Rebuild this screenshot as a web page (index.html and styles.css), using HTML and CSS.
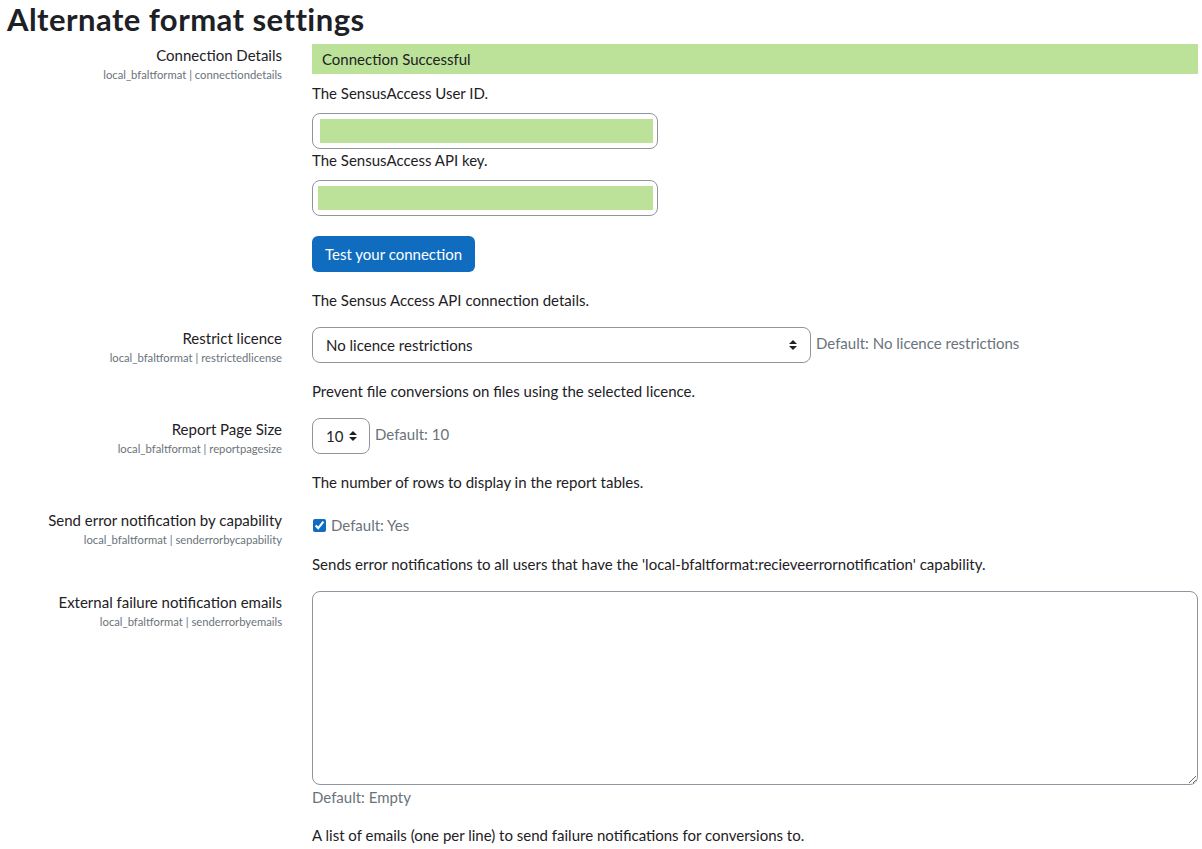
FILE: index.html
```html
<!DOCTYPE html>
<html>
  <head>
    <meta charset="UTF-8" />
    <meta name="viewport" content="width=device-width, initial-scale=1.0" />
    <title>Alternate format settings</title>
    <link rel="stylesheet" href="styles.css">
  </head>
  <body>
    <h2 class="page-title">Alternate format settings</h2>

    <div class="settings">
      <div class="form-item">
        <div class="form-label">
          <label>Connection Details</label>
          <span class="form-shortname">local_bfaltformat | connectiondetails</span>
        </div>
        <div class="form-setting">
          <div class="status-bar">Connection Successful</div>
          <p class="field-label">The SensusAccess User ID.</p>
          <div class="form-control redacted-box"><span class="redacted"></span></div>
          <p class="field-label tight">The SensusAccess API key.</p>
          <div class="form-control redacted-box key"><span class="redacted"></span></div>
          <button type="button" class="btn-primary">Test your connection</button>
          <div class="form-description">The Sensus Access API connection details.</div>
        </div>
      </div>

      <div class="form-item">
        <div class="form-label">
          <label for="restrictedlicense">Restrict licence</label>
          <span class="form-shortname">local_bfaltformat | restrictedlicense</span>
        </div>
        <div class="form-setting">
          <div class="select-line">
            <select id="restrictedlicense" class="custom-select wide">
              <option>No licence restrictions</option>
            </select>
            <span class="form-defaultinfo">Default: No licence restrictions</span>
          </div>
          <div class="form-description">Prevent file conversions on files using the selected licence.</div>
        </div>
      </div>

      <div class="form-item">
        <div class="form-label">
          <label for="reportpagesize">Report Page Size</label>
          <span class="form-shortname">local_bfaltformat | reportpagesize</span>
        </div>
        <div class="form-setting">
          <div class="select-line">
            <select id="reportpagesize" class="custom-select small">
              <option>10</option>
            </select>
            <span class="form-defaultinfo">Default: 10</span>
          </div>
          <div class="form-description">The number of rows to display in the report tables.</div>
        </div>
      </div>

      <div class="form-item">
        <div class="form-label">
          <label for="senderrorbycapability">Send error notification by capability</label>
          <span class="form-shortname">local_bfaltformat | senderrorbycapability</span>
        </div>
        <div class="form-setting">
          <div class="form-check">
            <input type="checkbox" id="senderrorbycapability" checked />
            <span class="form-defaultinfo">Default: Yes</span>
          </div>
          <div class="form-description">Sends error notifications to all users that have the 'local-bfaltformat:recieveerrornotification' capability.</div>
        </div>
      </div>

      <div class="form-item">
        <div class="form-label">
          <label for="senderrorbyemails">External failure notification emails</label>
          <span class="form-shortname">local_bfaltformat | senderrorbyemails</span>
        </div>
        <div class="form-setting">
          <textarea id="senderrorbyemails" class="form-textarea"></textarea>
          <div class="form-defaultinfo block">Default: Empty</div>
          <div class="form-description last">A list of emails (one per line) to send failure notifications for conversions to.</div>
        </div>
      </div>
    </div>
  </body>
</html>
```

FILE: styles.css
```css
* {
  box-sizing: border-box;
  margin: 0;
  padding: 0;
}

body {
  font-family: Lato, "Liberation Sans", sans-serif;
  font-size: 15px;
  line-height: 22px;
  color: #1d2125;
  background-color: #fff;
  padding: 0 4px 0 0;
}

.page-title {
  font-size: 31px;
  font-weight: 700;
  letter-spacing: 0.45px;
  line-height: 1.2;
  padding: 1px 0 0 7px;
  height: 44px;
}

.form-item {
  display: grid;
  grid-template-columns: 282px 1fr;
  column-gap: 30px;
  margin-bottom: 16px;
}

.form-label {
  text-align: right;
}

.form-label label {
  display: block;
}

.form-shortname {
  display: block;
  font-size: 11.25px;
  line-height: 17px;
  color: #6a737b;
}

.status-bar {
  background-color: #bce29a;
  height: 30px;
  line-height: 30px;
  padding: 0 10px;
}

.field-label {
  margin-top: 8px;
}

.field-label.tight {
  margin-top: 0;
}

.form-control {
  border: 1px solid #8f959e;
  border-radius: 8px;
  background-color: #fff;
}

.redacted-box {
  width: 346px;
  height: 36px;
  margin-top: 9px;
  padding: 5px 4px 5px 7px;
}

.redacted-box.key {
  padding-left: 5px;
}

.redacted {
  display: block;
  height: 100%;
  background-color: #bce29a;
}

.btn-primary {
  display: block;
  margin-top: 20px;
  height: 36px;
  padding: 0 13px;
  background-color: #0f6cbf;
  color: #fff;
  border: none;
  border-radius: 6px;
  font-family: inherit;
  font-size: 15px;
}

.form-description {
  margin-top: 17px;
}

.form-description.last {
  margin-top: 16px;
}

.select-line {
  display: flex;
  align-items: center;
}

.custom-select {
  appearance: none;
  -webkit-appearance: none;
  height: 36px;
  border: 1px solid #8f959e;
  border-radius: 8px;
  background-color: #fff;
  background-image: url("data:image/svg+xml,%3Csvg xmlns='http://www.w3.org/2000/svg' width='8' height='10' viewBox='0 0 8 10'%3E%3Cpath d='M0 4 L4 0 L8 4 Z M0 6 L8 6 L4 10 Z' fill='%231d2125'/%3E%3C/svg%3E");
  background-repeat: no-repeat;
  background-position: right 13px center;
  font-family: inherit;
  font-size: 15px;
  color: #1d2125;
  padding: 0 30px 0 13px;
}

.custom-select.wide {
  width: 499px;
}

.custom-select.small {
  width: 58px;
  padding-right: 20px;
  background-position: right 12px center;
}

.form-defaultinfo {
  color: #6a737b;
  margin-left: 5px;
  position: relative;
  top: -2px;
}

.form-defaultinfo.block {
  display: block;
  margin-left: 0;
  top: 0;
  margin-top: 1px;
}

.form-check {
  display: flex;
  align-items: center;
  margin-top: 5px;
  height: 22px;
}

.form-check input {
  width: 13px;
  height: 13px;
  margin-left: 1px;
  accent-color: #0f6cbf;
}

.form-check .form-defaultinfo {
  margin-left: 5px;
  top: 0;
}

.form-textarea {
  display: block;
  width: 100%;
  height: 194px;
  border: 1px solid #8f959e;
  border-radius: 8px;
  font-family: inherit;
  font-size: 15px;
  resize: both;
}
```
